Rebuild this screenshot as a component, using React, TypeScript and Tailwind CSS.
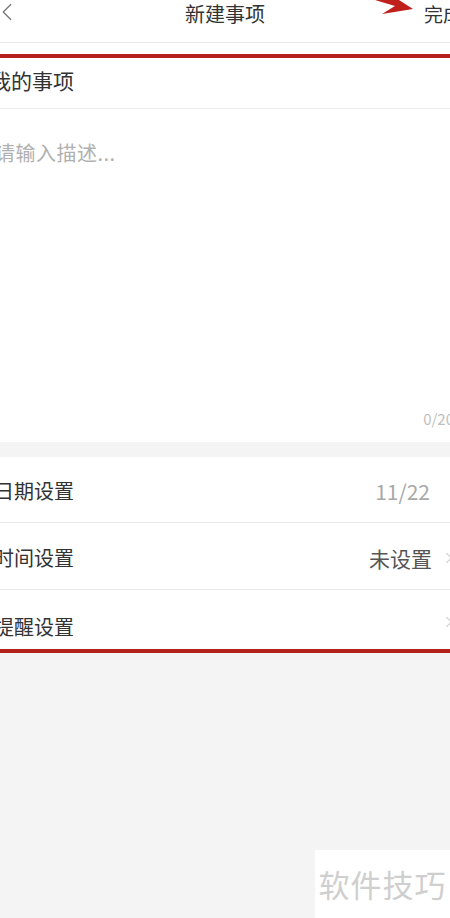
import { ChevronLeft, ChevronRight } from 'lucide-react';

const font = { fontFamily: '"Noto Sans CJK SC", "Noto Sans", sans-serif' };

export default function App() {
  return (
    <div className="w-[450px] h-[918px] overflow-hidden bg-[#f4f4f4] flex flex-col text-[#333]" style={font}>
      {/* Header */}
      <div className="relative h-[43px] bg-white border-b border-[#ececec] flex items-start justify-between">
        <ChevronLeft className="w-[30px] h-[30px] -ml-[8px] mt-[-3px] text-[#777]" strokeWidth={1} />
        <div className="absolute left-0 right-0 top-[1px] text-center text-[20px] leading-[26px] text-[#333]">新建事项</div>
        <div className="flex items-start">
          <svg width="45" height="16" viewBox="0 0 45 16" className="mr-[9px]">
            <path d="M5 0 L29 0 L43 9 L12 14 L25 6 Z" fill="#c0201b" />
          </svg>
          <span className="text-[19px] leading-[26px] -mr-[12px] mt-[1px]">完成</span>
        </div>
      </div>

      <div className="h-[11px] bg-white" />
      <div className="h-[4px] bg-[#b4201b]" />

      {/* Title row */}
      <div className="h-[51px] bg-white border-b border-[#ececec] flex items-center">
        <span className="-ml-[10px] text-[21px] leading-[28px] mt-[-6px]">我的事项</span>
      </div>

      {/* Description */}
      <div className="h-[333px] bg-white flex flex-col justify-between">
        <span className="-ml-[5px] mt-[30px] text-[20px] leading-[28px] tracking-[0.5px] text-[#b0b0b0]">请输入描述...</span>
        <span className="self-end -mr-[4px] mb-[14px] text-[15px] leading-[18px] text-[#c0c0c0]">0/20</span>
      </div>

      <div className="h-[15px]" />

      {/* Settings */}
      <div className="bg-white flex flex-col">
        <div className="h-[66px] border-b border-[#ececec] flex items-center justify-between">
          <span className="-ml-[6px] text-[20px] leading-[28px] mt-[2px]">日期设置</span>
          <span className="mr-[20px] text-[21px] leading-[28px] text-[#a8a8a8] mt-[2px]">11/22</span>
        </div>
        <div className="h-[67px] border-b border-[#ececec] flex items-center justify-between">
          <span className="-ml-[6px] text-[20px] leading-[28px] mt-[3px]">时间设置</span>
          <div className="flex items-center mt-[3px]">
            <span className="text-[21px] leading-[28px] text-[#555]">未设置</span>
            <ChevronRight className="w-[18px] h-[18px] ml-[8px] -mr-[8px] text-[#d0d0d0]" strokeWidth={1.5} />
          </div>
        </div>
        <div className="h-[59px] flex items-end justify-between pb-[8px]">
          <span className="-ml-[6px] text-[20px] leading-[28px]">提醒设置</span>
          <ChevronRight className="w-[18px] h-[18px] mb-[10px] -mr-[8px] text-[#d0d0d0]" strokeWidth={1.5} />
        </div>
      </div>
      <div className="h-[4px] bg-[#b4201b]" />

      <div className="flex-1 flex items-end justify-end">
        <div className="w-[135px] h-[68px] bg-white flex items-center justify-center">
          <span className="text-[31px] leading-[40px] text-[#cfcfcf] tracking-[1px]">软件技巧</span>
        </div>
      </div>
    </div>
  );
}
